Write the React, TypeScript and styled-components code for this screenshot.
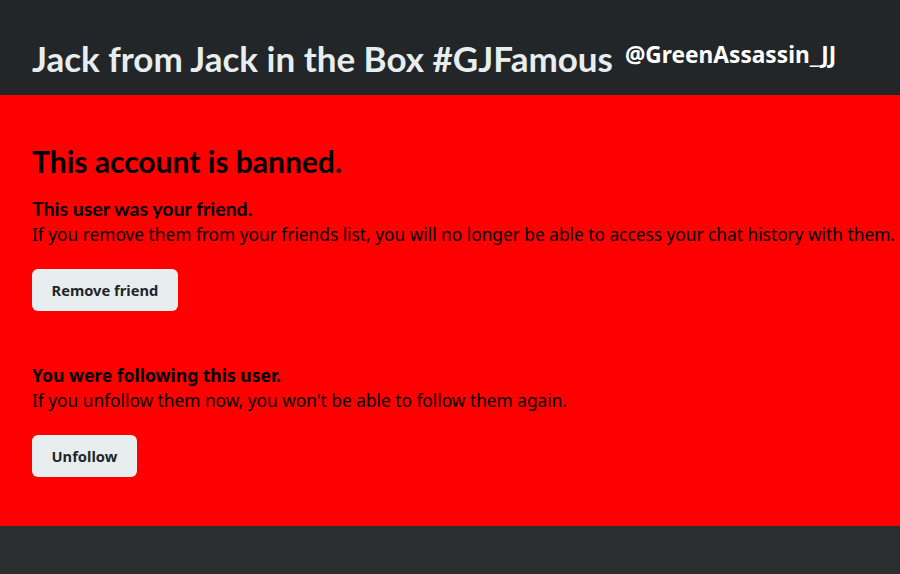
import * as React from 'react';
import styled, { createGlobalStyle } from 'styled-components';

const GlobalStyle = createGlobalStyle`
  html, body {
    margin: 0;
    padding: 0;
    background: #2a2e2f;
  }
  body {
    font-family: "Noto Sans", "Open Sans", sans-serif;
    overflow: hidden;
  }
`;

const Page = styled.div`
  width: 900px;
  height: 574px;
  display: flex;
  flex-direction: column;
  background: #2a2e2f;
`;

const Header = styled.header`
  height: 95px;
  box-sizing: border-box;
  background: #222628;
  display: flex;
  align-items: flex-end;
  gap: 12px;
  padding: 0 0 17px 32px;
  white-space: nowrap;
`;

const Title = styled.h1`
  margin: 0;
  font-family: Lato, "Liberation Sans", sans-serif;
  font-weight: 700;
  font-size: 35px;
  line-height: 40px;
  color: #e8eef0;
`;

const Handle = styled.span`
  font-family: "Noto Sans", "Open Sans", sans-serif;
  font-weight: 700;
  font-size: 22.7px;
  line-height: 30px;
  color: #ffffff;
  margin-bottom: 8px;
`;

const Banned = styled.section`
  background: #ff0000;
  height: 431px;
  box-sizing: border-box;
  padding: 48px 0 0 32px;
  color: #000;
  white-space: nowrap;
`;

const Heading = styled.h2`
  margin: 0 0 18px;
  font-family: Lato, "Liberation Sans", sans-serif;
  font-weight: 700;
  font-size: 30px;
  line-height: 36px;
`;

const Block = styled.div<{ $gap?: number }>`
  margin-bottom: ${(p) => p.$gap ?? 0}px;
`;

const Label = styled.div<{ $lato?: boolean }>`
  margin-bottom: 2px;
  font-family: ${(p) => (p.$lato ? 'Lato, "Liberation Sans", sans-serif' : '"Noto Sans", "Open Sans", sans-serif')};
  font-weight: 700;
  font-size: ${(p) => (p.$lato ? 19.5 : 17.5)}px;
  line-height: 24px;
`;

const Note = styled.p`
  margin: 0 0 22px;
  font-family: "Noto Sans", "Open Sans", sans-serif;
  font-size: 17.3px;
  line-height: 24px;
`;

const Button = styled.button`
  display: block;
  height: 42px;
  padding: 0 19.5px;
  border: none;
  border-radius: 6px;
  background: #e8eef0;
  color: #222628;
  font-family: "Noto Sans", "Open Sans", sans-serif;
  font-weight: 700;
  font-size: 14.7px;
  cursor: pointer;
`;

const Footer = styled.footer`
  flex: 1;
  background: #2a2e2f;
`;

export default function App() {
  return (
    <Page>
      <GlobalStyle />
      <Header>
        <Title>Jack from Jack in the Box #GJFamous</Title>
        <Handle>@GreenAssassin_JJ</Handle>
      </Header>
      <Banned>
        <Heading>This account is banned.</Heading>
        <Block $gap={52}>
          <Label $lato>This user was your friend.</Label>
          <Note>
            If you remove them from your friends list, you will no longer be able to access your chat history with them.
          </Note>
          <Button>Remove friend</Button>
        </Block>
        <Block>
          <Label>You were following this user.</Label>
          <Note>If you unfollow them now, you won't be able to follow them again.</Note>
          <Button>Unfollow</Button>
        </Block>
      </Banned>
      <Footer />
    </Page>
  );
}
